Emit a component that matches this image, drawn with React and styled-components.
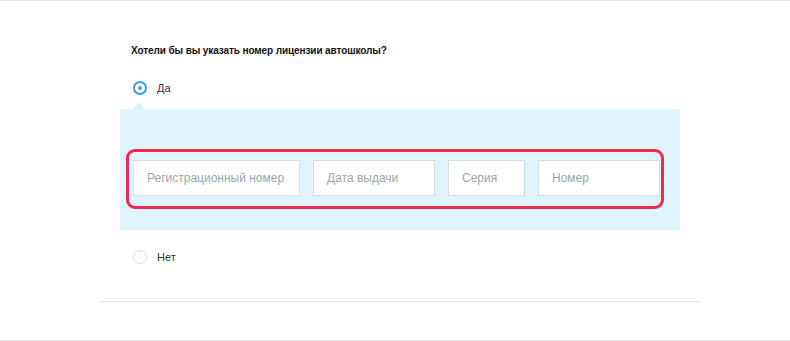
import React, { useState } from "react";
import styled, { createGlobalStyle } from "styled-components";

const GlobalStyle = createGlobalStyle`
	body {
		margin: 0;
		background: #fff;
		font-family: "Liberation Sans", Arial, sans-serif;
	}
`;

const fields = [
	{ name: "reg", label: "Регистрационный номер", width: 167 },
	{ name: "date", label: "Дата выдачи", width: 122 },
	{ name: "series", label: "Серия", width: 77 },
	{ name: "number", label: "Номер", width: 122 },
];

const App = () => {
	const [answer, setAnswer] = useState("yes");

	return (
		<Page>
			<GlobalStyle />
			<Content>
				<Section>
					<Question>Хотели бы вы указать номер лицензии автошколы?</Question>

					<Option onClick={() => setAnswer("yes")}>
						<Radio $checked={answer === "yes"} />
						<span>Да</span>
					</Option>

					{answer === "yes" && (
						<Panel>
							<Frame>
								{fields.map((f) => (
									<Field key={f.name} $width={f.width} placeholder={f.label} />
								))}
							</Frame>
						</Panel>
					)}

					<Option $gap onClick={() => setAnswer("no")}>
						<Radio $checked={answer === "no"} />
						<span>Нет</span>
					</Option>
				</Section>
				<Divider />
			</Content>
		</Page>
	);
};

export default App;

const Page = styled.main`
	border-top: 1px solid #e6e6e6;
	border-bottom: 1px solid #e6e6e6;
	height: 339px;
`;

const Content = styled.div`
	width: 600px;
	margin-left: 100px;
	padding-top: 43px;
`;

const Section = styled.div`
	padding: 0 20px;
`;

const Question = styled.h2`
	margin: 0 0 23px 11px;
	font-size: 10px;
	line-height: 14px;
	font-weight: bold;
	letter-spacing: -0.1px;
	color: #111;
`;

const Option = styled.label`
	display: flex;
	align-items: center;
	gap: 10px;
	height: 14px;
	padding-left: 13px;
	margin-top: ${(p) => (p.$gap ? "20px" : "0")};
	font-size: 11px;
	color: #333;
	cursor: pointer;
`;

const Radio = styled.span`
	box-sizing: border-box;
	width: 14px;
	height: 14px;
	border-radius: 50%;
	border: ${(p) => (p.$checked ? "2px solid #3aa0d8" : "1px solid #dedede")};
	display: flex;
	align-items: center;
	justify-content: center;

	&::after {
		content: "";
		display: ${(p) => (p.$checked ? "block" : "none")};
		width: 4px;
		height: 4px;
		border-radius: 50%;
		background: #3aa0d8;
	}
`;

const Panel = styled.div`
	position: relative;
	margin-top: 14px;
	background: #dff4fc;
	padding: 40px 16px 21px 6px;

	&::before {
		content: "";
		position: absolute;
		left: 13px;
		top: -7px;
		border-left: 6px solid transparent;
		border-right: 6px solid transparent;
		border-bottom: 7px solid #dcf0f8;
	}
`;

const Frame = styled.div`
	display: flex;
	gap: 13px;
	border: 3px solid #f02a4a;
	border-radius: 9px;
	padding: 8px 1px 10px 4px;
`;

const Field = styled.input`
	box-sizing: border-box;
	width: ${(p) => p.$width}px;
	height: 36px;
	border: 1px solid #d4dde2;
	background: #fff;
	padding: 0 13px;
	font-family: "Liberation Sans", Arial, sans-serif;
	font-size: 12px;
	color: #333;
	outline: none;

	&::placeholder {
		color: #9aa6ae;
	}
`;

const Divider = styled.hr`
	margin: 37px 0 0;
	border: 0;
	border-top: 1px solid #e2e6ea;
`;
